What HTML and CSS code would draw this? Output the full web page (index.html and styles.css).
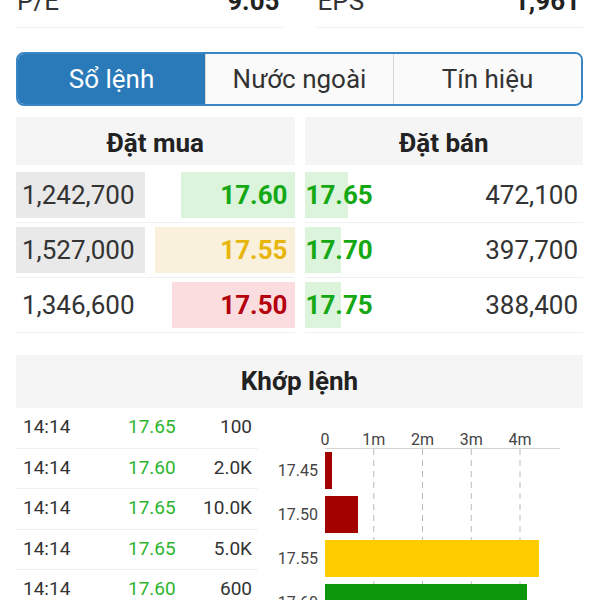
FILE: index.html
```html
<!DOCTYPE html>
<html lang="vi">
<head>
    <meta charset="UTF-8">
    <title>Sổ lệnh</title>
    <meta name="viewport" content="width=device-width, initial-scale=1.0">
    <link rel="stylesheet" href="styles.css">
</head>
<body>
<div class="page">
    <div class="stats">
        <div class="stat"><span>P/E</span><b>9.05</b></div>
        <div class="stat"><span>EPS</span><b>1,961</b></div>
    </div>

    <div class="tabs">
        <div class="tab active">Sổ lệnh</div>
        <div class="tab">Nước ngoài</div>
        <div class="tab">Tín hiệu</div>
    </div>

    <div class="book">
        <div class="side">
            <div class="book-head">Đặt mua</div>
            <div class="book-row">
                <div class="qty hl" style="width:129px">1,242,700</div>
                <div class="bid up" style="width:114px">17.60</div>
            </div>
            <div class="book-row">
                <div class="qty hl" style="width:129px">1,527,000</div>
                <div class="bid ref" style="width:140px">17.55</div>
            </div>
            <div class="book-row">
                <div class="qty">1,346,600</div>
                <div class="bid down" style="width:123px">17.50</div>
            </div>
        </div>
        <div class="side">
            <div class="book-head">Đặt bán</div>
            <div class="book-row">
                <div class="ask" style="background-size:43px 100%">17.65</div>
                <div class="ask-qty">472,100</div>
            </div>
            <div class="book-row">
                <div class="ask" style="background-size:36px 100%">17.70</div>
                <div class="ask-qty">397,700</div>
            </div>
            <div class="book-row">
                <div class="ask" style="background-size:36px 100%">17.75</div>
                <div class="ask-qty">388,400</div>
            </div>
        </div>
    </div>

    <div class="match">
        <div class="match-head">Khớp lệnh</div>
        <div class="match-body">
            <div class="trades">
                <div class="trade"><span>14:14</span><span class="tp">17.65</span><span>100</span></div>
                <div class="trade"><span>14:14</span><span class="tp">17.60</span><span>2.0K</span></div>
                <div class="trade"><span>14:14</span><span class="tp">17.65</span><span>10.0K</span></div>
                <div class="trade"><span>14:14</span><span class="tp">17.65</span><span>5.0K</span></div>
                <div class="trade"><span>14:14</span><span class="tp">17.60</span><span>600</span></div>
            </div>
            <svg class="chart" width="325" height="194" viewBox="0 0 325 194">
                <g class="axis-labels" text-anchor="middle">
                    <text x="67" y="37">0</text>
                    <text x="115.75" y="37">1m</text>
                    <text x="164.5" y="37">2m</text>
                    <text x="213.25" y="37">3m</text>
                    <text x="262" y="37">4m</text>
                </g>
                <line x1="67" y1="40.5" x2="302" y2="40.5" stroke="#d4d4d4" stroke-width="1"/>
                <g stroke="#bbb" stroke-width="1" stroke-dasharray="6 5">
                    <line x1="115.75" y1="41" x2="115.75" y2="194"/>
                    <line x1="164.5" y1="41" x2="164.5" y2="194"/>
                    <line x1="213.25" y1="41" x2="213.25" y2="194"/>
                    <line x1="262" y1="41" x2="262" y2="194"/>
                </g>
                <rect x="67" y="44" width="7" height="37" fill="#a30000"/>
                <rect x="67" y="88" width="33" height="37" fill="#a30000"/>
                <rect x="67" y="132" width="214" height="37" fill="#ffcc00"/>
                <rect x="67" y="176" width="202" height="37" fill="#0b960b"/>
                <g class="axis-labels" text-anchor="end">
                    <text x="60" y="68">17.45</text>
                    <text x="60" y="112">17.50</text>
                    <text x="60" y="156">17.55</text>
                    <text x="60" y="200">17.60</text>
                </g>
            </svg>
        </div>
    </div>
</div>
</body>
</html>
```

FILE: styles.css
```css
body {
    margin: 0;
    font-family: Roboto, "Noto Sans", sans-serif;
    color: #333;
    background: #fff;
}
.page {
    padding: 0 17px 0 16px;
}

/* stats row, scrolled partly off the top */
.stats {
    display: grid;
    grid-template-columns: 1fr 1fr;
    column-gap: 34px;
    margin-top: -21px;
}
.stat {
    display: flex;
    justify-content: space-between;
    height: 48px;
    line-height: 44px;
    font-size: 26px;
    padding: 0 3px 0 1px;
    border-bottom: 1px solid #eee;
}
.stat b {
    color: #222;
}

/* tabs */
.tabs {
    display: flex;
    margin-top: 24px;
    height: 54px;
    box-sizing: border-box;
    border: 2px solid #3a86c4;
    border-radius: 8px;
    overflow: hidden;
}
.tab {
    flex: 1;
    text-align: center;
    font-size: 26px;
    line-height: 50px;
    background: #fafafa;
    color: #333;
}
.tab + .tab {
    border-left: 1px solid #d8d8d8;
}
.tab.active {
    background: #2a7aba;
    color: #fff;
    border-left: none;
}

/* order book */
.book {
    display: grid;
    grid-template-columns: 1fr 1fr;
    column-gap: 10px;
    margin-top: 11px;
}
.book-head {
    height: 48px;
    line-height: 52px;
    background: #f5f5f5;
    font-size: 26px;
    font-weight: bold;
    text-align: center;
    color: #222;
    margin-bottom: 3px;
    overflow: hidden;
}
.book-row {
    display: flex;
    padding: 4px 0;
    border-bottom: 1px solid #eef0f2;
    font-size: 26px;
    line-height: 47px;
    height: 46px;
}
.qty {
    padding-left: 6px;
    box-sizing: border-box;
}
.qty.hl {
    background: #e9e9e9;
}
.bid {
    margin-left: auto;
    text-align: right;
    padding-right: 7px;
    box-sizing: border-box;
    font-weight: bold;
}
.up {
    background: #dcf3dc;
    color: #14a814;
}
.ref {
    background: #f9f1dc;
    color: #e8b50c;
}
.down {
    background: #fbdde0;
    color: #b5000e;
}
.ask {
    padding-left: 1px;
    font-weight: bold;
    color: #14a814;
    background-image: linear-gradient(#dcf3dc, #dcf3dc);
    background-repeat: no-repeat;
}
.ask-qty {
    margin-left: auto;
    padding-right: 5px;
}

/* matched trades */
.match {
    margin-top: 22px;
}
.match-head {
    height: 53px;
    line-height: 53px;
    background: #f5f5f5;
    font-size: 26px;
    font-weight: bold;
    text-align: center;
    color: #222;
}
.match-body {
    display: grid;
    grid-template-columns: 242px 1fr;
}
.trade {
    display: grid;
    grid-template-columns: 105px 1fr auto;
    height: 39.6px;
    line-height: 38px;
    padding: 0 6px 0 7px;
    border-bottom: 1px solid #eef0f2;
    font-size: 19px;
}
.tp {
    color: #2db52d;
}
.chart {
    display: block;
    overflow: hidden;
}
.axis-labels {
    font-family: Roboto, "Noto Sans", sans-serif;
    font-size: 16px;
    fill: #444;
}
```
